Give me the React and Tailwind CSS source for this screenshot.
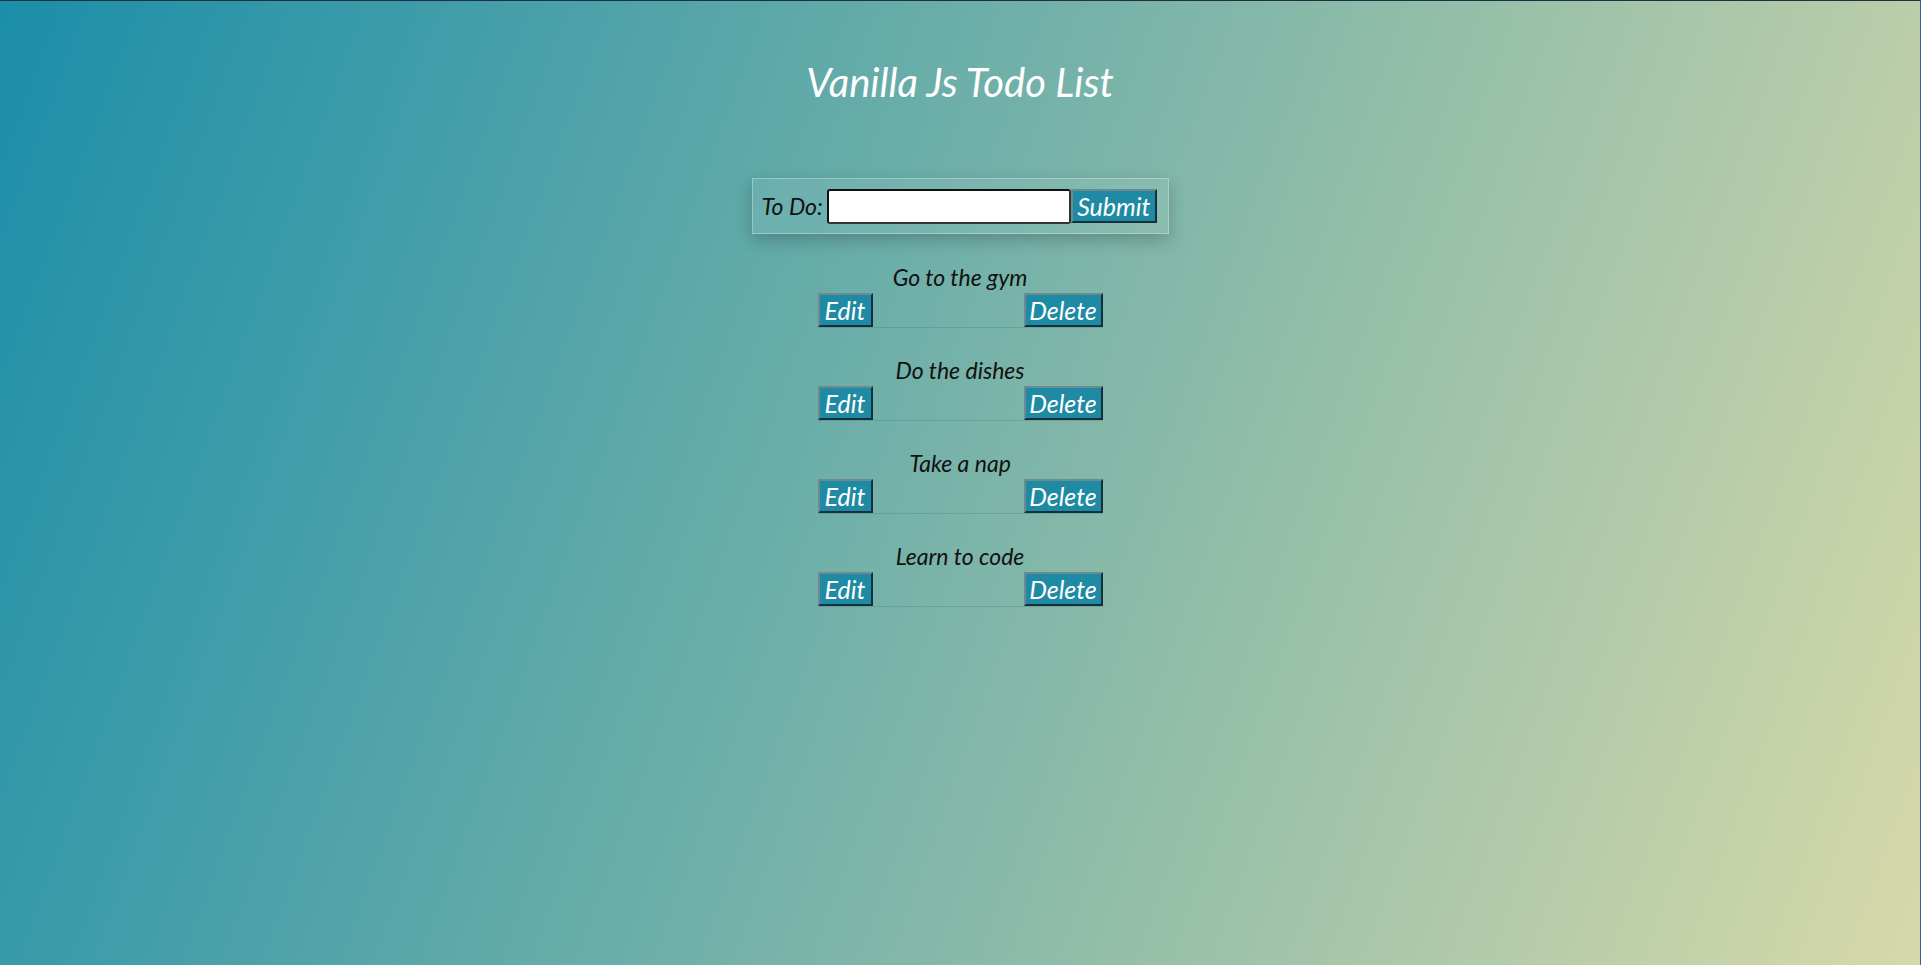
import React from "react";

const todos = ["Go to the gym", "Do the dishes", "Take a nap", "Learn to code"];

function Btn({ children, w }) {
  return (
    <button
      type="button"
      className={`${w} shrink-0 h-[34px] bg-[#1f8aa3] text-white text-[25px] leading-none italic border-2 border-t-[#6c8a90] border-l-[#6c8a90] border-b-[#16303b] border-r-[#16303b] flex items-center justify-center`}
    >
      {children}
    </button>
  );
}

export default function App() {
  return (
    <div className="min-h-[965px] w-full bg-[linear-gradient(110deg,#1b8ea9,#d7d9a9)] font-['Lato','Liberation_Sans',sans-serif] italic border-t border-t-[#1d3140] border-r border-r-[#3565a0] flex flex-col items-center">
      <h1 className="mt-[57px] text-[40px] leading-[48px] text-white font-normal">
        Vanilla Js Todo List
      </h1>
      <form
        className="mt-[72px] w-[417px] h-[56px] border border-[rgba(255,255,255,0.3)] bg-[rgba(255,255,255,0.07)] shadow-[0_6px_16px_rgba(0,0,0,0.22)] flex items-center pl-[9px] pr-[10px]"
        onSubmit={(e) => e.preventDefault()}
      >
        <label className="shrink-0 whitespace-nowrap text-[23px] leading-none text-[#111] mr-[4px]">To Do:</label>
        <input
          type="text"
          className="shrink-0 w-[244px] h-[35px] bg-white border-2 border-t-[#111] border-l-[#111] border-b-[#333] border-r-[#333] rounded-[3px] outline-none"
        />
        <Btn w="w-[86px]">Submit</Btn>
      </form>
      <ul className="mt-[30px] flex flex-col gap-[29px]">
        {todos.map((t) => (
          <li key={t} className="w-[285px] flex flex-col">
            <span className="text-center text-[23px] leading-[26px] text-[#111]">{t}</span>
            <div className="mt-[3px] flex justify-between border-b border-b-[rgba(20,90,110,0.18)]">
              <Btn w="w-[55px]">Edit</Btn>
              <Btn w="w-[79px]">Delete</Btn>
            </div>
          </li>
        ))}
      </ul>
    </div>
  );
}
